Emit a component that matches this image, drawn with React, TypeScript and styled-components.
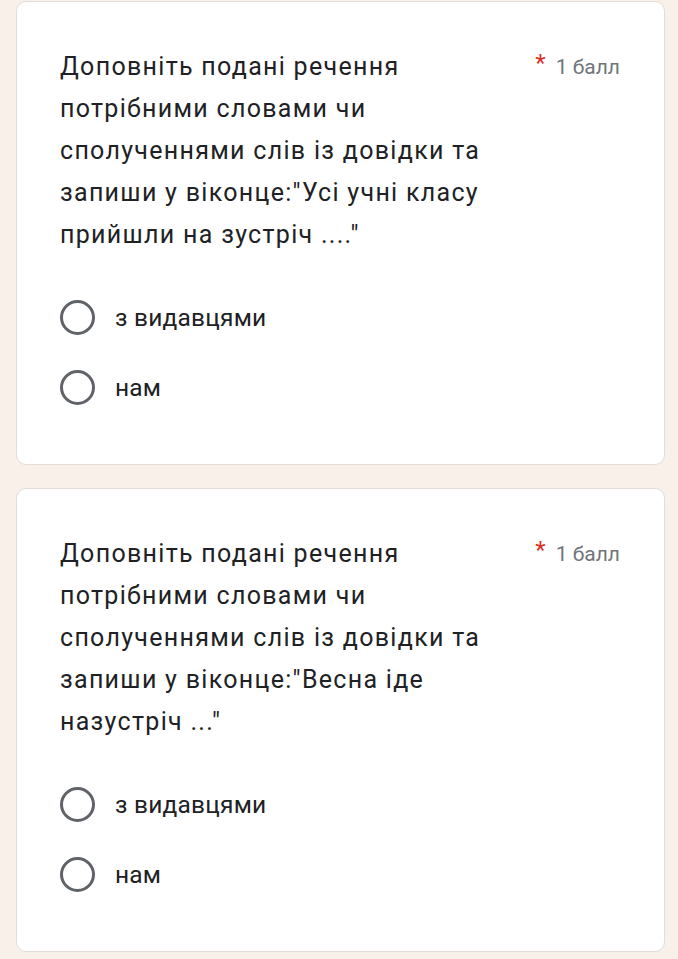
import styled, { createGlobalStyle } from 'styled-components'

const GlobalStyle = createGlobalStyle`
  html, body {
    margin: 0;
    padding: 0;
    background: #faf0ea;
  }
  body {
    font-family: Roboto, "Noto Sans", sans-serif;
  }
`

const Page = styled.div`
  width: 678px;
  min-height: 959px;
  box-sizing: border-box;
  padding: 1px 13px 0 16px;
  display: flex;
  flex-direction: column;
  gap: 23px;
`

const Card = styled.section`
  box-sizing: border-box;
  height: 464px;
  background: #fff;
  border: 1px solid #e3dcd8;
  border-radius: 10px;
  padding: 44px 44px 0 43px;
`

const Header = styled.div`
  display: flex;
  justify-content: space-between;
  align-items: flex-start;
`

const Question = styled.div`
  font-family: Roboto, "Noto Sans", sans-serif;
  font-size: 25px;
  line-height: 42px;
  letter-spacing: 1.3px;
  color: #202124;
`

const Points = styled.div`
  display: flex;
  align-items: flex-start;
  gap: 10px;
  padding-top: 9px;
  font-size: 21px;
  color: #70757a;
  white-space: nowrap;
`

const Star = styled.span`
  color: #d93025;
  font-size: 24px;
  line-height: 1;
  margin-top: -4px;
`

const Options = styled.ul`
  list-style: none;
  margin: 44px 0 0;
  padding: 0;
  display: flex;
  flex-direction: column;
  gap: 35px;
`

const Option = styled.li`
  display: flex;
  align-items: center;
  gap: 20px;
  font-size: 24.5px;
  letter-spacing: 0.2px;
  color: #202124;
  height: 35px;
`

const Radio = styled.span`
  box-sizing: border-box;
  width: 35px;
  height: 35px;
  border-radius: 50%;
  border: 3px solid #5f6368;
  flex: none;
`

const questions = [
  [
    'Доповніть подані речення',
    'потрібними словами чи',
    'сполученнями слів із довідки та',
    'запиши у віконце:"Усі учні класу',
    'прийшли на зустріч ...."',
  ],
  [
    'Доповніть подані речення',
    'потрібними словами чи',
    'сполученнями слів із довідки та',
    'запиши у віконце:"Весна іде',
    'назустріч ..."',
  ],
]

function App() {
  return (
    <>
      <GlobalStyle />
      <Page>
        {questions.map((lines, i) => (
          <Card key={i}>
            <Header>
              <Question>
                {lines.map((l, j) => (
                  <div key={j}>{l}</div>
                ))}
              </Question>
              <Points>
                <Star>*</Star>
                <span>1 балл</span>
              </Points>
            </Header>
            <Options>
              <Option>
                <Radio />
                з видавцями
              </Option>
              <Option>
                <Radio />
                нам
              </Option>
            </Options>
          </Card>
        ))}
      </Page>
    </>
  )
}

export default App
